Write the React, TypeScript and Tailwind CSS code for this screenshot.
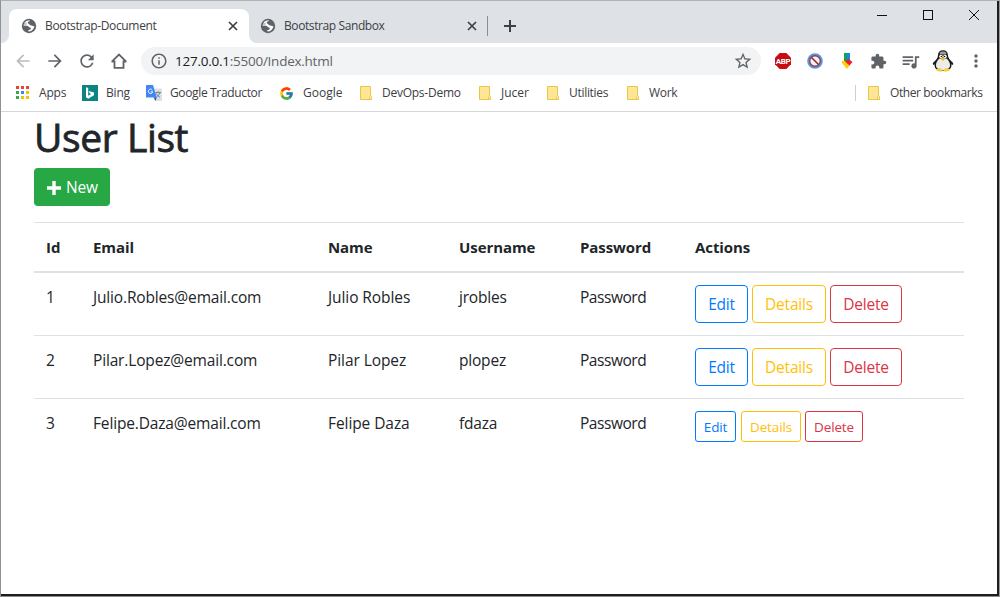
import type { ReactNode } from "react";
import {
  MdArrowBack,
  MdArrowForward,
  MdExtension,
  MdMoreVert,
  MdOutlineInfo,
  MdQueueMusic,
  MdRefresh,
  MdStarBorder,
} from "react-icons/md";
import { FcGoogle } from "react-icons/fc";

function GlobeIcon() {
  return (
    <svg width="16" height="16" viewBox="0 0 16 16">
      <circle cx="8" cy="8" r="7.200" fill="#5f6368" />
      <path d="M8.800 2.300C8.900 3.600 7 3.400 6.800 4.600c-.1 1 .9.900 1.300 1.500.4.900 1 1.300 2 1.300 1.100 0 1.500.9 3.300.7-.1 1.900-1.400 3.900-3.300 4.800-.9.400-1.800.6-2.900.4 0-1 .2-1.400 1.200-1.500 1-.1 1.600-.7 1.500-1.600-.2-1-1.600-.8-2.300-1.500C6.600 7.700 4.600 8.100 2.600 8c0-2.900 2.300-5.900 6.200-5.700Z" fill="#fff" />
      <path d="M2.300 5.200 6.800 4.600 5.300 6.300l2.300 2.400-5 .1Z" fill="#5f6368" opacity=".35" />
    </svg>
  );
}

function CloseIcon() {
  return (
    <svg width="10" height="10" viewBox="0 0 10 10" stroke="#3c4043" strokeWidth="1.7">
      <path d="M1 1 9 9M9 1 1 9" />
    </svg>
  );
}

function TabStrip() {
  return (
    <div className="flex h-[42px] shrink-0 bg-[#dee1e6] pt-2">
      <div className="flex h-[34px] w-2 items-end bg-white">
        <div className="h-full w-2 rounded-br-lg bg-[#dee1e6]" />
      </div>
      <div className="h-[34px] w-[240px] bg-[#dee1e6]">
        <div className="flex h-full items-center rounded-t-lg bg-white pl-[12px]">
          <GlobeIcon />
          <span className="ml-[8px] w-[183px] text-[12px] tracking-[-0.350px] text-[#3c4043]">Bootstrap-Document</span>
          <CloseIcon />
        </div>
      </div>
      <div className="flex h-[34px] flex-1 bg-white">
        <div className="flex flex-1 rounded-bl-lg bg-[#dee1e6]">
          <div className="flex h-[34px] w-[239px] items-center border-r border-transparent pl-[11px]">
            <GlobeIcon />
            <span className="ml-[8px] w-[183px] text-[12px] tracking-[-0.4px] text-[#3c4043]">Bootstrap Sandbox</span>
            <CloseIcon />
          </div>
          <div className="mt-[7px] -ml-[1px] h-5 w-px bg-[#8a8d91]" />
          <svg className="mt-[11px] ml-[16px]" width="12" height="12" viewBox="0 0 12 12" stroke="#3c4043" strokeWidth="2">
            <path d="M0 6h12M6 0v12" />
          </svg>
          <div className="-mt-2 ml-auto flex h-7 items-center text-black">
            <svg width="138" height="28" viewBox="0 0 138 28" fill="none" stroke="#111">
              <path d="M18 14.500h10" />
              <rect x="64.500" y="9.500" width="9" height="9" />
              <path d="M110 9l10 10M120 9l-10 10" />
            </svg>
          </div>
        </div>
      </div>
    </div>
  );
}

function Penguin() {
  return (
    <svg width="22" height="22" viewBox="0 0 22 22">
      <path d="M6 8 .8 13 1 15 6 13ZM16 8 21.200 13 21 15 16 13Z" fill="#222" />
      <path d="M6 5C6 2 8 .3 11 .3S16 2 16 5.500c0 3 3.500 5 3.500 9.500 0 4-3.500 6-8.500 6s-8.500-2-8.500-6c0-4.500 3.500-6 3.500-10Z" fill="#1b1b1b" />
      <path d="M7.500 2.800c1.500-1.700 5.500-1.700 7 0l-.5 1.700H8Z" fill="#9a9a9a" />
      <path d="M7.500 8.500h7c2.300 2 3.800 4.500 3.500 7.500-.5 2.500-3.500 4-7 4s-6.500-1.500-7-4c-.3-3 1.200-5.500 3.500-7.500Z" fill="#ececec" />
      <circle cx="9" cy="6.500" r="1.800" fill="#fff" />
      <circle cx="13" cy="6.500" r="1.800" fill="#fff" />
      <circle cx="9.400" cy="6.500" r=".8" fill="#111" />
      <circle cx="12.600" cy="6.500" r=".8" fill="#111" />
      <path d="M8.500 8.500 11 7.300l2.500 1.200L11 11Z" fill="#f2bd16" />
      <path d="M4.500 19 7.500 17.800l3.500 2.400-1.800 1.600-4.500-.8ZM17.500 19 14.500 17.800 11 20.200l1.800 1.600 4.500-.8Z" fill="#f3cf45" />
    </svg>
  );
}

function Toolbar() {
  return (
    <div className="flex h-9 shrink-0 items-center bg-white pl-[12px]">
      <MdArrowBack className="size-5 text-[#babcbe]" />
      <MdArrowForward className="ml-3 size-5 text-[#5f6368]" />
      <MdRefresh className="ml-3 size-5 text-[#5f6368]" />
      <svg className="ml-[13px]" width="18" height="18" viewBox="0 0 18 18" fill="none" stroke="#5f6368" strokeWidth="1.800">
        <path d="M1.800 9.700 9 2.500l7.200 7.200M1.500 9.500h3v6.400h9V9.500h3" />
      </svg>
      <div className="ml-[13px] flex h-7 w-[620px] items-center rounded-full bg-[#f1f3f4] pr-2 pl-[9px]">
        <MdOutlineInfo className="size-[18px] text-[#5f6368]" />
        <span className="ml-[7px] text-[13.500px] tracking-[-0.250px] text-[#5f6368]">
          <span className="text-[#202124]">127.0.0.1</span>:5500/Index.html
        </span>
        <MdStarBorder className="ml-auto size-5 text-[#5f6368]" />
      </div>
      <div className="flex flex-1 items-center pl-[14px]">
        <svg className="overflow-visible" width="16" height="16" viewBox="0 0 16 16">
          <path d="M4.700 0h6.600L16 4.700v6.600L11.300 16H4.700L0 11.300V4.700Z" fill="#c70d12" />
          <text x="8" y="11" textAnchor="middle" fontSize="8" fontWeight="700" fill="#fff" fontFamily="Roboto, sans-serif" letterSpacing="-0.3">ABP</text>
        </svg>
        <svg className="ml-4" width="16" height="16" viewBox="0 0 16 16" fill="none">
          <circle cx="8" cy="8" r="7.800" fill="#4f9be6" />
          <circle cx="8" cy="8" r="5.300" fill="#f3f3f3" stroke="#a33a43" strokeWidth="1.400" />
          <path d="m4.500 4.500 7 7" stroke="#8f2c3c" strokeWidth="1.600" />
        </svg>
        <svg className="ml-[18px]" width="12" height="16" viewBox="0 0 12 16">
          <path d="M3 0h3v8H3Z" fill="#10a54a" />
          <path d="M6 0h3v8H6Z" fill="#1588e8" />
          <path d="M1 8h3.500L9 12l-3 4-5-6Z" fill="#ffd000" />
          <path d="M4 8.500 7.500 6l4 3L8.500 12.500Z" fill="#ee1c2e" />
        </svg>
        <MdExtension className="ml-[17px] size-[17px] text-[#5f6368]" />
        <MdQueueMusic className="ml-[13px] size-[21px] text-[#5f6368]" />
        <div className="ml-[11px]"><Penguin /></div>
        <MdMoreVert className="ml-3 size-5 text-[#5f6368]" />
      </div>
    </div>
  );
}

function FolderIcon() {
  return (
    <svg width="16" height="16" viewBox="0 0 16 16">
      <path d="M2.500 1.500h10v9.500h1v3.500h-11Z" fill="#ffe694" stroke="#e8c64a" />
      <path d="M11.500 14v-2.500l1-1 1 1V14Z" fill="#fff0b5" stroke="#e8c64a" strokeWidth=".8" />
    </svg>
  );
}

function AppsIcon() {
  const colors = ["#ea4335", "#ea4335", "#ea4335", "#34a853", "#4285f4", "#fbbc05", "#34a853", "#fbbc05", "#fbbc05"];
  return (
    <svg width="16" height="16" viewBox="0 0 16 16">
      {colors.map((c, i) => (
        <rect key={i} x={2 + (i % 3) * 5} y={1 + Math.floor(i / 3) * 5} width="3" height="3" fill={c} />
      ))}
    </svg>
  );
}

function BingIcon() {
  return (
    <svg width="16" height="16" viewBox="0 0 16 16">
      <path d="M0 0h16v16H0Z" fill="#0c8484" />
      <path d="m4 2.300 2.200.8v7.600l3-1.700-1.500-.7-1-2.400L12 7.600v2.600l-5.800 3.500L4 12.300Z" fill="#fff" />
    </svg>
  );
}

function TranslateIcon() {
  return (
    <svg width="16" height="16" viewBox="0 0 16 16">
      <path d="M6 3.500h9.200c.5 0 .8.300.8.800v10.900c0 .5-.3.800-.8.800H9.500Z" fill="#dcdfe3" />
      <path d="M9.500 7.500H15M12.200 6.300v1.200M14 7.500c-.5 2-2 3.500-3.500 4.500M10.500 8.500c.8 2 2 3 3.500 3.800" stroke="#6f8795" strokeWidth="1" fill="none" />
      <path d="M1 0h6l3.800 12.500H1c-.6 0-1-.4-1-1V1c0-.6.4-1 1-1Z" fill="#4285f4" />
      <path d="m7.500 12.500 3.300 0L9.500 16Z" fill="#2a56c6" />
      <path d="M6.300 5A2.200 2.200 0 1 0 6.700 6.800H4.700" stroke="#fff" strokeWidth="1" fill="none" />
    </svg>
  );
}

function Bookmark({ icon, label, box }: { icon: ReactNode; label: string; box: string }) {
  return (
    <div className={`flex shrink-0 items-center gap-2 ${box}`}>
      {icon}
      <span className="text-[12px] whitespace-nowrap text-[#3c4043]">{label}</span>
    </div>
  );
}

function BookmarksBar() {
  return (
    <div className="flex h-[33px] shrink-0 items-center border-b border-[#d5d7da] bg-white pb-[4px] pl-[13px]">
      <Bookmark icon={<AppsIcon />} label="Apps" box="w-[68px] gap-[9px] tracking-[-0.2px]" />
      <Bookmark icon={<BingIcon />} label="Bing" box="w-[64px] tracking-[-0.2px]" />
      <Bookmark icon={<TranslateIcon />} label="Google Traductor" box="w-[133px] tracking-[-0.350px]" />
      <Bookmark icon={<FcGoogle size={15} className="mr-px" />} label="Google" box="w-[79px]" />
      <Bookmark icon={<FolderIcon />} label="DevOps-Demo" box="w-[119px] tracking-[-0.250px]" />
      <Bookmark icon={<FolderIcon />} label="Jucer" box="w-[68px]" />
      <Bookmark icon={<FolderIcon />} label="Utilities" box="w-[80px] tracking-[-0.3px]" />
      <Bookmark icon={<FolderIcon />} label="Work" box="w-[80px] tracking-[-0.3px]" />
      <div className="ml-auto h-4 w-px bg-[#cdcfd2]" />
      <Bookmark icon={<FolderIcon />} label="Other bookmarks" box="ml-[10px] w-[131px] tracking-[-0.4px]" />
    </div>
  );
}

const users = [
  { id: 1, email: "Julio.Robles@email.com", name: "Julio Robles", username: "jrobles", small: false },
  { id: 2, email: "Pilar.Lopez@email.com", name: "Pilar Lopez", username: "plopez", small: false },
  { id: 3, email: "Felipe.Daza@email.com", name: "Felipe Daza", username: "fdaza", small: true },
];

function Actions({ small }: { small: boolean }) {
  const base = "flex items-center justify-center border";
  const size = small
    ? "h-[31px] rounded-[3px] text-[13.500px] tracking-[-0.150px]"
    : "h-[38px] rounded text-[15.500px] tracking-[-0.2px]";
  return (
    <div className="flex gap-1">
      <button className={`${base} ${size} ${small ? "mr-px w-[41px]" : "w-[53px]"} border-[#007bff] text-[#007bff]`}>Edit</button>
      <button className={`${base} ${size} ${small ? "w-[60px]" : "w-[74px]"} border-[#ffc107] text-[#ffc107]`}>Details</button>
      <button className={`${base} ${size} ${small ? "w-[58px]" : "w-[72px]"} border-[#dc3545] text-[#dc3545]`}>Delete</button>
    </div>
  );
}

function UserTable() {
  const cols = "grid grid-cols-[47px_235px_131px_121px_115px_281px] *:px-3 *:whitespace-nowrap";
  return (
    <div className="mt-4 w-[930px] text-[15.500px] leading-6 text-[#212529]">
      <div className={`${cols} border-t border-b-2 border-[#dee2e6] py-3 text-[15px] font-bold tracking-[-0.080px]`}>
        <span>Id</span>
        <span>Email</span>
        <span>Name</span>
        <span>Username</span>
        <span>Password</span>
        <span>Actions</span>
      </div>
      {users.map((u) => (
        <div key={u.id} className={`${cols} border-[#dee2e6] py-3 not-last:border-b`}>
          <span>{u.id}</span>
          <span className="tracking-[-0.160px]">{u.email}</span>
          <span className="tracking-[-0.080px]">{u.name}</span>
          <span className="tracking-[-0.2px]">{u.username}</span>
          <span className="tracking-[-0.450px]">Password</span>
          <Actions small={u.small} />
        </div>
      ))}
    </div>
  );
}

export default function App() {
  return (
    <div className="flex h-[597px] w-[1000px] flex-col overflow-hidden border border-t-[#b0b1b2] border-r-[#9a9a9a] border-b-[#8c8c8c] border-l-[#919191] font-['Open_Sans',sans-serif]">
      <div className="flex flex-1 flex-col border-r-2 border-b-2 border-[#1e1e1e] bg-white">
        <TabStrip />
        <Toolbar />
        <BookmarksBar />
        <main className="pl-[33px]">
          <h1 className="h-12 text-[39px] leading-[50px] font-medium tracking-[-0.4px] text-[#212529] [-webkit-text-stroke:0.8px_#212529]">User List</h1>
          <button className="mt-2 flex h-[38px] w-[76px] items-center rounded bg-[#28a745] pt-px pl-[13px] text-[15.500px] tracking-[-0.2px] text-white">
            <svg width="14" height="14" viewBox="0 0 14 14" fill="none" stroke="#fff" strokeWidth="3.400">
              <path d="M0 7h14M7 0v14" />
            </svg>
            <span className="ml-[5px]">New</span>
          </button>
          <UserTable />
        </main>
      </div>
    </div>
  );
}
